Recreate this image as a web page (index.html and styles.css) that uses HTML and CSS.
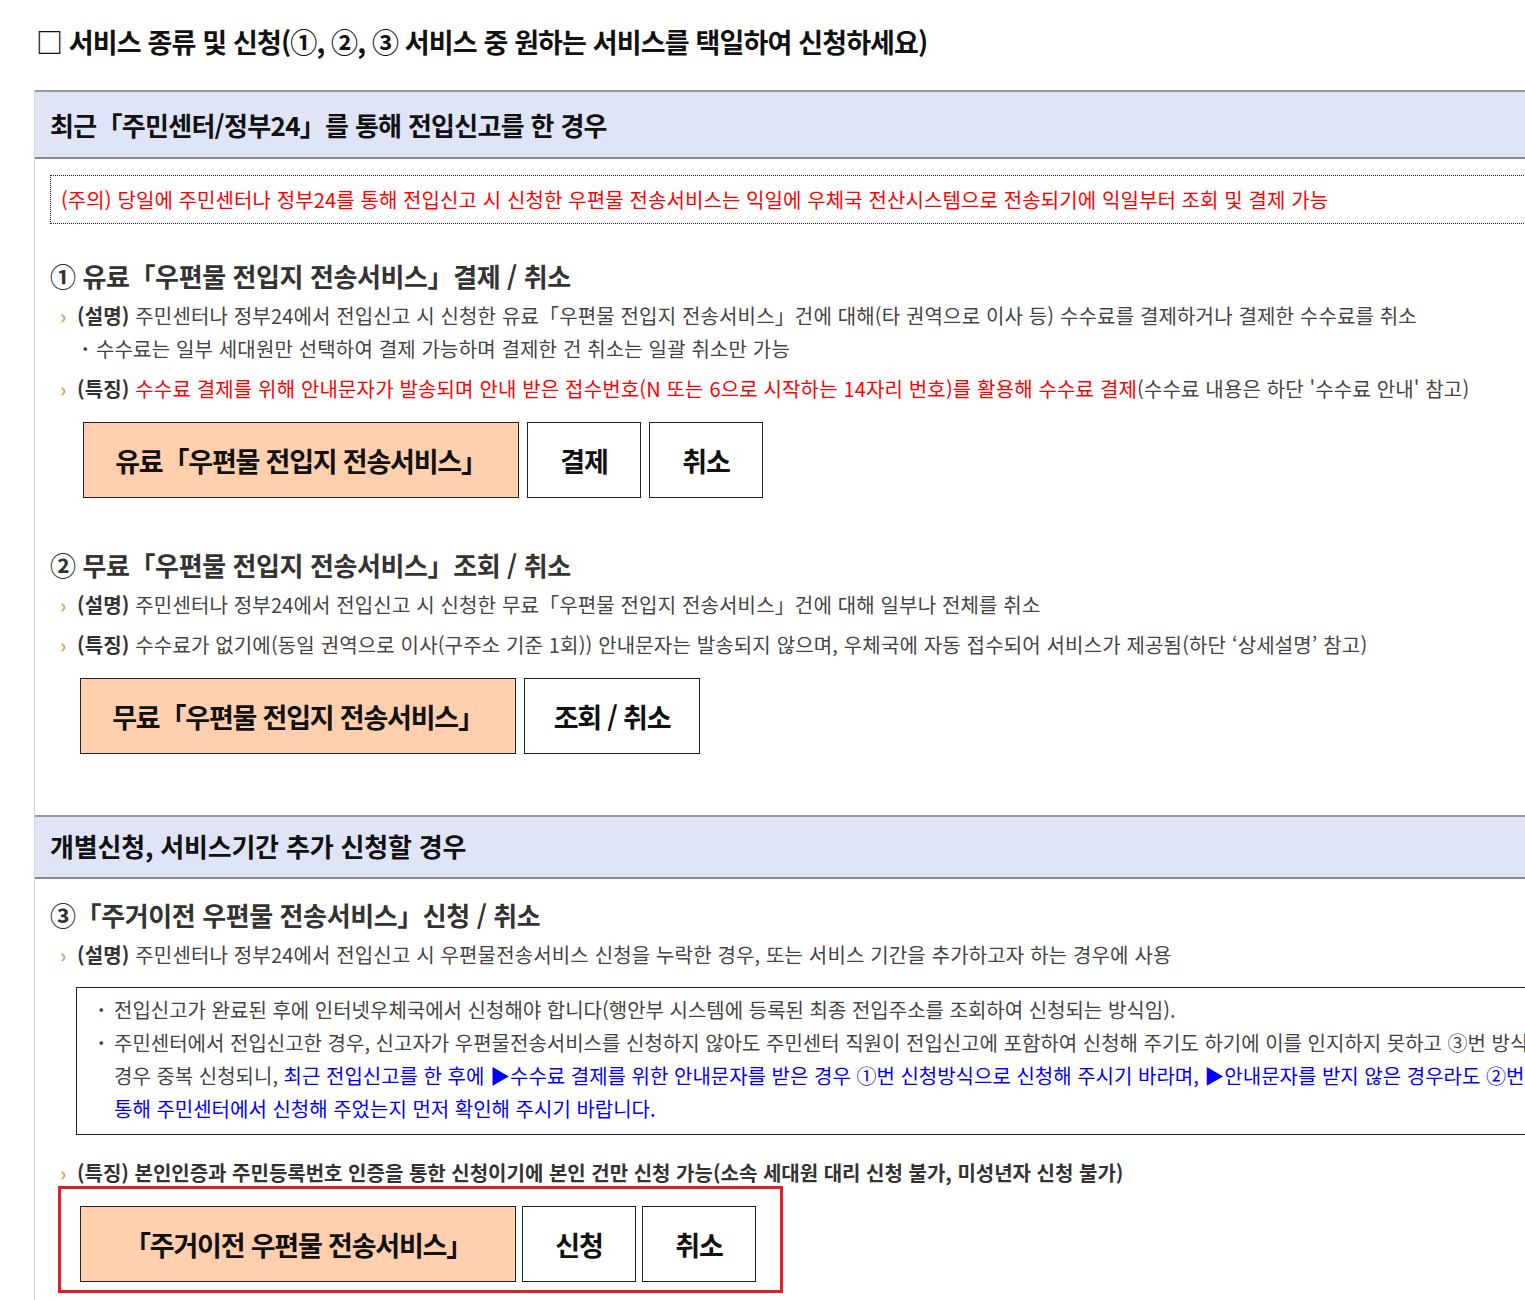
FILE: index.html
```html
<!DOCTYPE html>
<html lang="ko">
<head>
<meta charset="UTF-8" />
<meta name="viewport" content="width=device-width, initial-scale=1" />
<title>서비스 종류 및 신청</title>
<link rel="stylesheet" href="styles.css">
</head>
<body>

<div class="page">
  <h1 class="page-title">□ 서비스 종류 및 신청(①, ②, ③ 서비스 중 원하는 서비스를 택일하여 신청하세요)</h1>

  <div class="svc">
    <h2 class="svc-head">최근「주민센터/정부24」를 통해 전입신고를 한 경우</h2>
    <div class="svc-body">
      <p class="notice">(주의) 당일에 주민센터나 정부24를 통해 전입신고 시 신청한 우편물 전송서비스는 익일에 우체국 전산시스템으로 전송되기에 익일부터 조회 및 결제 가능</p>

      <div class="item">
        <h3>① 유료「우편물 전입지 전송서비스」결제 / 취소</h3>
        <ul class="desc">
          <li><b>(설명)</b> 주민센터나 정부24에서 전입신고 시 신청한 유료「우편물 전입지 전송서비스」건에 대해(타 권역으로 이사 등) 수수료를 결제하거나 결제한 수수료를 취소
            <div class="sub">수수료는 일부 세대원만 선택하여 결제 가능하며 결제한 건 취소는 일괄 취소만 가능</div>
          </li>
          <li><b>(특징)</b> <span class="red">수수료 결제를 위해 안내문자가 발송되며 안내 받은 접수번호(N 또는 6으로 시작하는 14자리 번호)를 활용해 수수료 결제</span>(수수료 내용은 하단 '수수료 안내' 참고)</li>
        </ul>
        <div class="btns btns-first">
          <button class="btn btn-main">유료「우편물 전입지 전송서비스」</button>
          <button class="btn btn-sm">결제</button>
          <button class="btn btn-sm">취소</button>
        </div>
      </div>

      <div class="item">
        <h3>② 무료「우편물 전입지 전송서비스」조회 / 취소</h3>
        <ul class="desc">
          <li><b>(설명)</b> 주민센터나 정부24에서 전입신고 시 신청한 무료「우편물 전입지 전송서비스」건에 대해 일부나 전체를 취소</li>
          <li><b>(특징)</b> 수수료가 없기에(동일 권역으로 이사(구주소 기준 1회)) 안내문자는 발송되지 않으며, 우체국에 자동 접수되어 서비스가 제공됨(하단 ‘상세설명’ 참고)</li>
        </ul>
        <div class="btns">
          <button class="btn btn-main">무료「우편물 전입지 전송서비스」</button>
          <button class="btn btn-md">조회 / 취소</button>
        </div>
      </div>
    </div>

    <h2 class="svc-head svc-head-2">개별신청, 서비스기간 추가 신청할 경우</h2>
    <div class="svc-body svc-body-2">
      <div class="item">
        <h3>③「주거이전 우편물 전송서비스」신청 / 취소</h3>
        <ul class="desc">
          <li><b>(설명)</b> 주민센터나 정부24에서 전입신고 시 우편물전송서비스 신청을 누락한 경우, 또는 서비스 기간을 추가하고자 하는 경우에 사용</li>
        </ul>
        <ul class="note-box">
          <li>전입신고가 완료된 후에 인터넷우체국에서 신청해야 합니다(행안부 시스템에 등록된 최종 전입주소를 조회하여 신청되는 방식임).</li>
          <li>주민센터에서 전입신고한 경우, 신고자가 우편물전송서비스를 신청하지 않아도 주민센터 직원이 전입신고에 포함하여 신청해 주기도 하기에 이를 인지하지 못하고 ③번 방식으로 신청할<br>경우 중복 신청되니, <span class="blue">최근 전입신고를 한 후에 ▶수수료 결제를 위한 안내문자를 받은 경우 ①번 신청방식으로 신청해 주시기 바라며, ▶안내문자를 받지 않은 경우라도 ②번 방식을<br>통해 주민센터에서 신청해 주었는지 먼저 확인해 주시기 바랍니다.</span></li>
        </ul>
        <ul class="desc desc-strong">
          <li>(특징) 본인인증과 주민등록번호 인증을 통한 신청이기에 본인 건만 신청 가능(소속 세대원 대리 신청 불가, 미성년자 신청 불가)</li>
        </ul>
        <div class="mark-box">
          <div class="btns btns-tight">
            <button class="btn btn-main">「주거이전 우편물 전송서비스」</button>
            <button class="btn btn-sm">신청</button>
            <button class="btn btn-sm">취소</button>
          </div>
        </div>
      </div>
    </div>
  </div>
</div>

</body>
</html>
```

FILE: styles.css
```css
* {
  box-sizing: border-box;
}
body {
  margin: 0;
  font-family: "Noto Sans CJK KR", sans-serif;
  color: #444;
  background: #fff;
  overflow: hidden;
}
.page {
  width: 1700px;
  padding: 22px 0 0 34px;
  white-space: nowrap;
}
.page-title {
  margin: 0 0 28px 0;
  padding-left: 2px;
  font-size: 27px;
  line-height: 40px;
  font-weight: 700;
  color: #111;
  letter-spacing: -0.85px;
}

/* 서비스 박스 */
.svc {
  border-left: 1px solid #d6d6d6;
}
.svc-head {
  margin: 0;
  height: 69px;
  padding-left: 15px;
  background: #dfe5f6;
  border-top: 2px solid #9a9a9a;
  border-bottom: 2px solid #888;
  font-size: 26px;
  line-height: 65px;
  font-weight: 700;
  color: #111;
  letter-spacing: -0.7px;
}
.svc-head-2 {
  height: 64px;
  line-height: 58px;
  letter-spacing: -0.2px;
}
.svc-body {
  padding: 16px 0 61px 15px;
}
.svc-body-2 {
  padding: 18px 0 20px 15px;
}
.notice {
  margin: 0 0 34px 0;
  padding: 0 10px;
  border: 1px dotted #222;
  font-size: 20px;
  line-height: 47px;
  color: #f00;
  letter-spacing: 0.1px;
}
.item + .item {
  margin-top: 49px;
}
.item h3 {
  margin: 0 0 5px 0;
  font-size: 26px;
  line-height: 36px;
  font-weight: 700;
  color: #333;
  letter-spacing: -0.4px;
}
.desc {
  list-style: none;
  margin: 0;
  padding: 0 0 0 10px;
}
.desc li {
  font-size: 20px;
  line-height: 33px;
  letter-spacing: 0.15px;
}
.desc li + li {
  margin-top: 7px;
}
.desc li::before {
  content: "›";
  display: inline-block;
  width: 17px;
  color: #d5a070;
  font-weight: 700;
}
.desc b {
  color: #333;
}
.desc .sub {
  padding-left: 22px;
}
.desc .sub::before {
  content: "·";
  display: inline-block;
  width: 14px;
  font-weight: 700;
}
.desc-strong {
  margin-top: 21px;
}
.desc-strong li {
  font-weight: 700;
  color: #333;
  letter-spacing: 0;
}
.red {
  color: #f00;
}
.blue {
  color: #00f;
}

/* 버튼 */
.btns {
  display: flex;
  gap: 8px;
  margin: 17px 0 0 30px;
}
.btns-first {
  margin-left: 33px;
}
.btns-tight {
  gap: 6px;
  margin: 0;
}
.btn {
  height: 76px;
  padding: 0;
  border: 1px solid #222;
  background: #fff;
  font-family: inherit;
  font-size: 27px;
  font-weight: 700;
  color: #111;
  letter-spacing: -1.2px;
  cursor: pointer;
}
.btn-main {
  width: 436px;
  background: #ffcfae;
}
.btn-sm {
  width: 114px;
}
.btn-md {
  width: 176px;
}

/* 안내 박스 */
.note-box {
  list-style: none;
  margin: 16px 0 0 26px;
  padding: 5px 0 9px 21px;
  border: 1px solid #222;
}
.note-box li {
  padding-left: 16px;
  text-indent: -16px;
  font-size: 20px;
  line-height: 33px;
}
.note-box li::before {
  content: "·";
  display: inline-block;
  width: 16px;
  text-indent: 0;
  font-weight: 700;
}
.mark-box {
  width: 725px;
  margin: -3px 0 0 8px;
  padding: 17px 0 8px 19px;
  border: 3px solid #e41e26;
}
```
